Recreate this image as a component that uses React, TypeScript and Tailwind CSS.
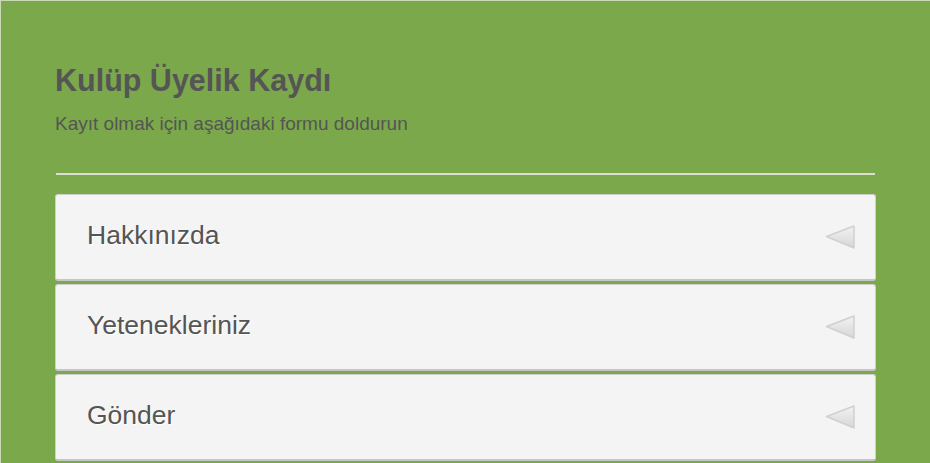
const sections = ["Hakkınızda", "Yetenekleriniz", "Gönder"];

function Arrow() {
  return (
    <svg width="32" height="26" viewBox="0 0 32 26" className="shrink-0">
      <defs>
        <linearGradient id="tri" x1="0" y1="0" x2="0" y2="1">
          <stop offset="0" stopColor="#f2f2f2" />
          <stop offset="1" stopColor="#d6d6d6" />
        </linearGradient>
      </defs>
      <polygon
        points="1.5,12.5 29,2 29,24"
        fill="url(#tri)"
        stroke="#d0d0d0"
        strokeWidth="1.5"
        strokeLinejoin="round"
      />
    </svg>
  );
}

function Section({ title }: { title: string }) {
  return (
    <div className="h-[87px] flex items-center justify-between pl-[31px] pr-[18px] bg-[#f4f4f4] border border-[#cfcfcf] border-b-2 border-b-[#c6c6c6] rounded-[3px]">
      <span className="text-[26.5px] text-[#555] [text-shadow:1px_1px_0_#fff] pb-[3px]">
        {title}
      </span>
      <Arrow />
    </div>
  );
}

export default function App() {
  return (
    <div className="w-[930px] h-[463px] overflow-hidden bg-[#7aa84a] border-t border-l border-[#c9d9b5] font-['Liberation_Sans',Arial,sans-serif]">
      <div className="px-[54px] pt-[60px]">
        <h1 className="text-[30.5px] font-bold text-[#555] leading-[38px]">
          Kulüp Üyelik Kaydı
        </h1>
        <p className="mt-[13px] text-[19px] text-[#555] leading-[24px]">
          Kayıt olmak için aşağıdaki formu doldurun
        </p>
        <div className="mt-[37px] mx-px h-[2px] bg-[#d9dfd0]" />
        <div className="mt-[19px] flex flex-col gap-[3px]">
          {sections.map((s) => (
            <Section key={s} title={s} />
          ))}
        </div>
      </div>
    </div>
  );
}
